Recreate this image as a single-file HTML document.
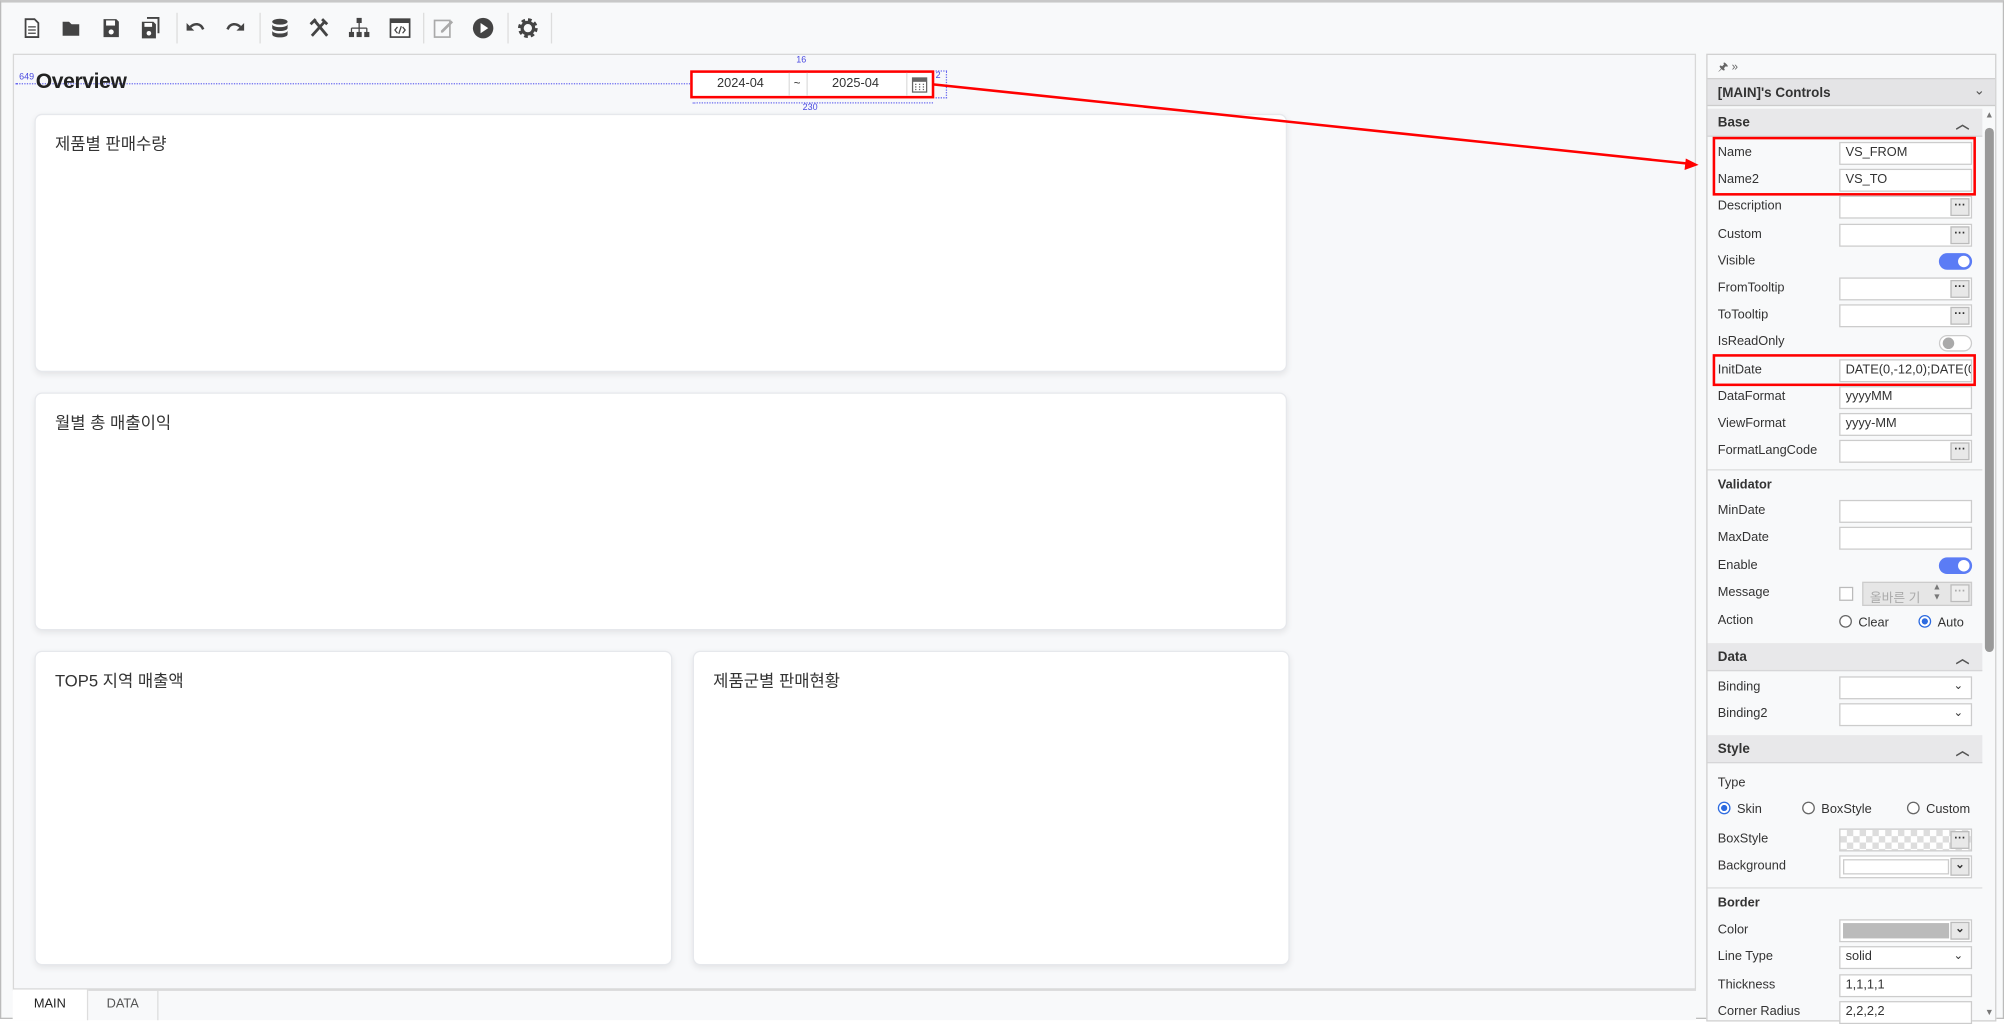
<!DOCTYPE html>
<html><head><meta charset="utf-8"><style>
*{box-sizing:border-box;margin:0;padding:0}
html,body{width:2004px;height:1019px;overflow:hidden;background:#fff}
#s{position:absolute;left:0;top:0;width:1568px;height:797px;transform:scale(1.2781,1.2785);transform-origin:0 0;background:#f8f9fa;font-family:"Liberation Sans","Noto Sans CJK KR",sans-serif;color:#333;border:1px solid #bbb;border-top:2px solid #c8c8c8}
.a{position:absolute}
.ic{position:absolute;top:11px;width:18px;height:18px;color:#444}
.sep{position:absolute;top:8px;width:1px;height:24px;background:#ddd}
.card{position:absolute;background:#fff;border:1px solid #e6e8ec;border-radius:6px;box-shadow:0 2px 5px rgba(0,0,0,.08)}
.card span{position:absolute;left:15px;top:12px;font-size:13px;color:#333}
.lb{position:absolute;left:8px;font-size:10px;color:#333}
.in{position:absolute;left:103px;width:104px;height:18px;background:#fff;border:1px solid #ccc;font-size:10px;padding:2px 4px;color:#333}
.dots{position:absolute;right:1px;top:1px;width:15px;height:14px;background:#e8e8e8;border:1px solid #bbb;font-size:9px;line-height:8px;text-align:center;font-weight:bold}
.hd{position:absolute;left:0;width:215px;height:22px;background:#e8e8ea;border-bottom:1px solid #d6d6d8;font-weight:bold;font-size:10.5px;padding:5px 8px}
.hd i{position:absolute;right:10px;top:4px;font-style:normal;font-size:11px;color:#555}
.tog{position:absolute;left:181px;width:26px;height:13px;border-radius:7px;background:#5b7cf5}
.tog:after{content:"";position:absolute;right:2px;top:2px;width:9px;height:9px;border-radius:50%;background:#fff}
.tog.off{background:#fff;border:1px solid #ccc}
.tog.off:after{left:2px;right:auto;top:1px;background:#aaa}
.rad{display:inline-block;width:10px;height:10px;border:1px solid #666;border-radius:50%;vertical-align:-1px;margin-right:5px;background:#fff}
.rad.on{border-color:#2d6be0;background:radial-gradient(#2d6be0 40%,#fff 45%)}
.dd{position:absolute;right:6px;top:1px;font-size:9px}
</style></head><body><div id="s">
<svg class="ic" style="left:15px" viewBox="0 0 18 18"><path d="M4 2h7l3 3v11H4z" fill="#fff" stroke="#444" stroke-width="1.4"/><path d="M6 8h6M6 10.5h6M6 13h6" stroke="#444"/></svg>
<svg class="ic" style="left:46px" viewBox="0 0 18 18"><path d="M2 4h5l2 2h6v9H2z" fill="#444"/></svg>
<svg class="ic" style="left:77px" viewBox="0 0 18 18"><path d="M3 2h10l2 2v12H3z" fill="#444"/><rect x="5" y="3" width="7" height="4" fill="#fff"/><circle cx="9" cy="12" r="2" fill="#fff"/></svg>
<svg class="ic" style="left:108px" viewBox="0 0 18 18"><path d="M6 1h9v12" fill="none" stroke="#444" stroke-width="1.5"/><path d="M2 4h9l2 2v11H2z" fill="#444"/><circle cx="7.5" cy="13" r="1.8" fill="#fff"/><rect x="4" y="5" width="6" height="3" fill="#fff"/></svg>
<div class="sep" style="left:137px"></div>
<svg class="ic" style="left:143px" viewBox="0 0 18 18"><path d="M5 8c3-3 8-3 10 2" fill="none" stroke="#444" stroke-width="2"/><path d="M2 5v6h6z" fill="#444"/></svg>
<svg class="ic" style="left:174px" viewBox="0 0 18 18"><path d="M13 8c-3-3-8-3-10 2" fill="none" stroke="#444" stroke-width="2"/><path d="M16 5v6h-6z" fill="#444"/></svg>
<div class="sep" style="left:202px"></div>
<svg class="ic" style="left:209px" viewBox="0 0 18 18"><ellipse cx="9" cy="4" rx="6" ry="2.3" fill="#444"/><path d="M3 6c0 3 12 3 12 0v3c0 3-12 3-12 0zM3 11c0 3 12 3 12 0v3c0 3-12 3-12 0z" fill="#444"/></svg>
<svg class="ic" style="left:240px" viewBox="0 0 18 18"><path d="M3 15L13 4M5 3l10 12M11 2l4 4M2 6l4-4" stroke="#444" stroke-width="2.2"/></svg>
<svg class="ic" style="left:271px" viewBox="0 0 18 18"><rect x="7" y="1" width="4" height="4" fill="#444"/><path d="M9 5v4M3 9h12M3 9v3M9 9v3M15 9v3" stroke="#444"/><rect x="1" y="12" width="4" height="4" fill="#444"/><rect x="7" y="12" width="4" height="4" fill="#444"/><rect x="13" y="12" width="4" height="4" fill="#444"/></svg>
<svg class="ic" style="left:303px" viewBox="0 0 18 18"><rect x="1.5" y="2" width="15" height="14" fill="#fff" stroke="#444" stroke-width="1.3"/><rect x="1.5" y="2" width="15" height="3" fill="#444"/><path d="M7 8l-2 2.5 2 2.5M11 8l2 2.5-2 2.5M10 7.5l-2 6" stroke="#444" fill="none"/></svg>
<div class="sep" style="left:330px"></div>
<svg class="ic" style="left:337px" viewBox="0 0 18 18"><rect x="2" y="3" width="12" height="13" fill="none" stroke="#aaa" stroke-width="1.3"/><path d="M7 11l8-8 1.5 1.5-8 8H7z" fill="#aaa"/></svg>
<svg class="ic" style="left:368px" viewBox="0 0 18 18"><circle cx="9" cy="9" r="8" fill="#444"/><path d="M7 5l6 4-6 4z" fill="#fff"/></svg>
<div class="sep" style="left:396px"></div>
<svg class="ic" style="left:403px" viewBox="0 0 18 18"><circle cx="9" cy="9" r="6" fill="none" stroke="#444" stroke-width="3.4" stroke-dasharray="2.6 2.1"/><circle cx="9" cy="9" r="4.5" fill="none" stroke="#444" stroke-width="2.5"/></svg>
<div class="sep" style="left:430px"></div>
<div class="a" style="left:9px;top:40px;width:1317px;height:732px;border:1px solid #d8d8d8;background:#f7f8fa"></div>
<div class="a" style="left:11px;top:63px;width:530px;border-top:1px dotted #6a6af0"></div>
<div class="a" style="left:14px;top:55px;font-size:7px;color:#4848e0">649</div>
<div class="a" style="left:27px;top:53px;font-size:16.5px;font-weight:bold;color:#222;letter-spacing:-0.3px">Overview</div>
<div class="a" style="left:622px;top:42px;font-size:7px;color:#4848e0">16</div>
<div class="a" style="left:541px;top:78px;width:188px;border-top:1px dotted #6a6af0"></div>
<div class="a" style="left:627px;top:79px;font-size:7px;color:#4848e0">230</div>
<div class="a" style="left:731px;top:53px;width:9px;height:22px;border:1px dotted #6a6af0;border-left:none;font-size:7px;color:#4848e0">2</div>
<div class="a" style="left:539px;top:53px;width:191px;height:22px;border:2px solid #f00;background:#fff"></div>
<div class="a" style="left:541px;top:55px;width:186px;height:18px;font-size:10px">
 <span class="a" style="left:19px;top:3px">2024-04</span><span class="a" style="left:75px;top:0;width:1px;height:18px;background:#ddd"></span>
 <span class="a" style="left:79px;top:3px;font-size:9px">~</span><span class="a" style="left:89px;top:0;width:1px;height:18px;background:#ddd"></span>
 <span class="a" style="left:109px;top:3px">2025-04</span><span class="a" style="left:167px;top:0;width:1px;height:18px;background:#ddd"></span>
 <svg class="a" style="left:171px;top:2px" width="13" height="14" viewBox="0 0 13 14"><rect x="1" y="2" width="11" height="11" fill="#fff" stroke="#666"/><rect x="1" y="2" width="11" height="3" fill="#666"/><path d="M3 7h1M6 7h1M9 7h1M3 9h1M6 9h1M9 9h1M3 11h1M6 11h1M9 11h1" stroke="#666"/></svg>
</div>
<div class="card" style="left:26px;top:87px;width:980px;height:202px"><span>제품별 판매수량</span></div>
<div class="card" style="left:26px;top:305px;width:980px;height:186px"><span>월별 총 매출이익</span></div>
<div class="card" style="left:26px;top:507px;width:499px;height:246px"><span>TOP5 지역 매출액</span></div>
<div class="card" style="left:541px;top:507px;width:467px;height:246px"><span>제품군별 판매현황</span></div>
<div class="a" style="left:9px;top:772px;width:1317px;height:24px;border-top:1px solid #d8d8d8;background:#f8f9fa"></div>
<div class="a" style="left:9px;top:772px;width:59px;height:24px;background:#fff;border-right:1px solid #ddd;font-size:10px;text-align:center;padding-top:6px;color:#222">MAIN</div>
<div class="a" style="left:68px;top:772px;width:55px;height:24px;border-right:1px solid #ddd;font-size:10px;text-align:center;padding-top:6px;color:#555">DATA</div>
<svg class="a" style="left:0;top:0" width="1568" height="797"><line x1="729" y1="64" x2="1320" y2="126" stroke="#f00" stroke-width="2"/><path d="M1328 127l-10-5-1 9z" fill="#f00"/></svg>
<div class="a" style="left:1334px;top:40px;width:227px;height:757px;border:1px solid #d0d0d0;background:#f8f9fa">
 <div class="a" style="left:8px;top:2px;font-size:9px;color:#666">🖈 »</div>
 <div class="a" style="left:0;top:18px;width:225px;height:22px;background:#e4e4e6;border-top:1px solid #d0d0d0;border-bottom:1px solid #ccc;font-size:10.5px;font-weight:bold;padding:5px 8px">[MAIN]'s Controls<span class="a" style="right:8px;top:3px;font-weight:normal;color:#555">⌄</span></div>
 <div class="a" style="left:216px;top:44px;width:9px;height:712px">
  <div class="a" style="left:1px;top:0;font-size:7px;color:#777">▲</div>
  <div class="a" style="left:1px;top:13px;width:7px;height:410px;border-radius:4px;background:#999"></div>
  <div class="a" style="left:1px;top:702px;font-size:7px;color:#777">▼</div>
 </div>
 <div class="hd" style="top:42px">Base<i>︿</i></div>
 <div class="a" style="left:0;top:0;width:215px;height:757px">
  <div class="lb" style="top:71px">Name</div><div class="in" style="top:68px">VS_FROM</div>
  <div class="lb" style="top:92px">Name2</div><div class="in" style="top:89px">VS_TO</div>
  <div class="a" style="left:4px;top:64px;width:206px;height:46px;border:2px solid #f00"></div>
  <div class="lb" style="top:113px">Description</div><div class="in" style="top:110px"><div class="dots">···</div></div>
  <div class="lb" style="top:135px">Custom</div><div class="in" style="top:132px"><div class="dots">···</div></div>
  <div class="lb" style="top:156px">Visible</div><div class="tog" style="top:155px"></div>
  <div class="lb" style="top:177px">FromTooltip</div><div class="in" style="top:174px"><div class="dots">···</div></div>
  <div class="lb" style="top:198px">ToTooltip</div><div class="in" style="top:195px"><div class="dots">···</div></div>
  <div class="lb" style="top:219px">IsReadOnly</div><div class="tog off" style="top:219px"></div>
  <div class="lb" style="top:241px">InitDate</div><div class="in" style="top:238px;overflow:hidden;white-space:nowrap">DATE(0,-12,0);DATE(0,</div>
  <div class="a" style="left:4px;top:234px;width:206px;height:25px;border:2px solid #f00"></div>
  <div class="lb" style="top:262px">DataFormat</div><div class="in" style="top:259px">yyyyMM</div>
  <div class="lb" style="top:283px">ViewFormat</div><div class="in" style="top:280px">yyyy-MM</div>
  <div class="lb" style="top:304px">FormatLangCode</div><div class="in" style="top:301px"><div class="dots">···</div></div>
  <div class="a" style="left:0;top:324px;width:215px;border-top:1px solid #ddd"></div>
  <div class="lb" style="top:331px;font-weight:bold">Validator</div>
  <div class="lb" style="top:351px">MinDate</div><div class="in" style="top:348px"></div>
  <div class="lb" style="top:372px">MaxDate</div><div class="in" style="top:369px"></div>
  <div class="lb" style="top:394px">Enable</div><div class="tog" style="top:393px"></div>
  <div class="lb" style="top:415px">Message</div>
  <div class="a" style="left:103px;top:416px;width:11px;height:11px;border:1px solid #bbb;background:#fff"></div>
  <div class="a" style="left:121px;top:412px;width:86px;height:19px;border:1px solid #ccc;background:#e6e6e6;font-size:10px;color:#aaa;padding:3px 5px">올바른 기<span class="a" style="left:54px;top:0;font-size:7px;color:#777;line-height:8px">▲<br>▼</span><div class="dots" style="background:#eee">···</div></div>
  <div class="lb" style="top:437px">Action</div>
  <div class="a" style="left:103px;top:438px;font-size:10px"><span class="rad"></span>Clear</div>
  <div class="a" style="left:165px;top:438px;font-size:10px"><span class="rad on"></span>Auto</div>
 </div>
 <div class="hd" style="top:460px">Data<i>︿</i></div>
 <div class="a" style="left:0;top:0;width:215px;height:757px">
  <div class="lb" style="top:489px">Binding</div><div class="in" style="top:486px"><span class="dd">⌄</span></div>
  <div class="lb" style="top:510px">Binding2</div><div class="in" style="top:507px"><span class="dd">⌄</span></div>
 </div>
 <div class="hd" style="top:532px">Style<i>︿</i></div>
 <div class="a" style="left:0;top:0;width:215px;height:757px">
  <div class="lb" style="top:564px">Type</div>
  <div class="a" style="left:8px;top:584px;font-size:10px"><span class="rad on"></span>Skin</div>
  <div class="a" style="left:74px;top:584px;font-size:10px"><span class="rad"></span>BoxStyle</div>
  <div class="a" style="left:156px;top:584px;font-size:10px"><span class="rad"></span>Custom</div>
  <div class="lb" style="top:608px">BoxStyle</div><div class="in" style="top:605px;background:repeating-conic-gradient(#ddd 0 25%,#fff 0 50%) 0 0/10px 10px"><div class="dots">···</div></div>
  <div class="lb" style="top:629px">Background</div><div class="in" style="top:626px;padding:2px"><div style="width:83px;height:12px;border:1px solid #ccc"></div><div class="dots" style="top:1px">⌄</div></div>
  <div class="a" style="left:0;top:651px;width:215px;border-top:1px solid #ddd"></div>
  <div class="lb" style="top:658px;font-weight:bold">Border</div>
  <div class="lb" style="top:679px">Color</div><div class="in" style="top:676px;padding:2px"><div style="width:83px;height:12px;background:#bbb"></div><div class="dots" style="top:1px">⌄</div></div>
  <div class="lb" style="top:700px">Line Type</div><div class="in" style="top:697px">solid<span class="dd">⌄</span></div>
  <div class="lb" style="top:722px">Thickness</div><div class="in" style="top:719px">1,1,1,1</div>
  <div class="lb" style="top:743px">Corner Radius</div><div class="in" style="top:740px">2,2,2,2</div>
 </div>
</div>
</div></body></html>
